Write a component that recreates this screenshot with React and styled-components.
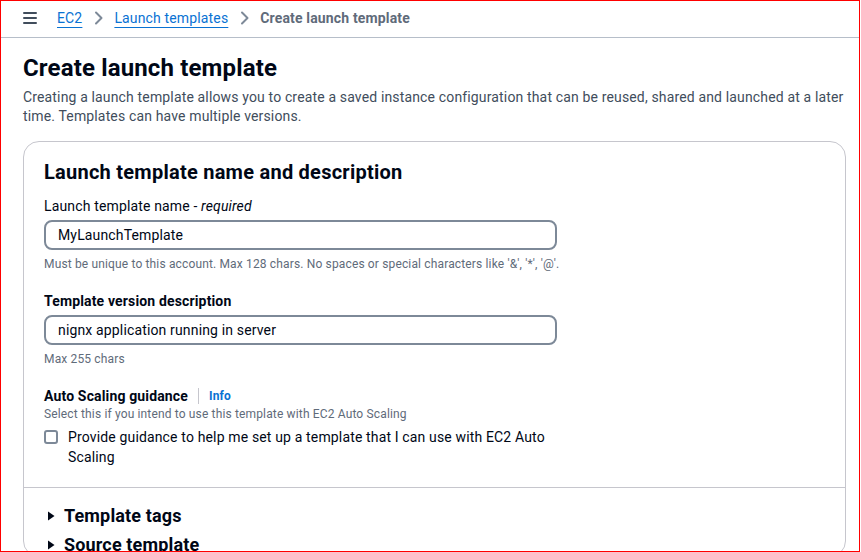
import React, { useState } from "react";
import styled, { createGlobalStyle } from "styled-components";

const GlobalStyle = createGlobalStyle`
  html, body {
    margin: 0;
    padding: 0;
    background: #ffffff;
  }
  body {
    font-family: Roboto, "Noto Sans", Arial, sans-serif;
    letter-spacing: 0.15px;
    color: #000716;
    -webkit-font-smoothing: antialiased;
  }
`;

export default function App() {
  const [guided, setGuided] = useState(false);

  return (
    <Frame>
      <GlobalStyle />
      <TopBar>
        <Burger aria-label="menu">
          <span />
          <span />
          <span />
        </Burger>
        <Crumbs>
          <Crumb href="#">EC2</Crumb>
          <Chevron />
          <Crumb href="#">Launch templates</Crumb>
          <Chevron />
          <Current>Create launch template</Current>
        </Crumbs>
      </TopBar>

      <Page>
        <Title>Create launch template</Title>
        <Lead>
          Creating a launch template allows you to create a saved instance
          configuration that can be reused, shared and launched at a later
          time. Templates can have multiple versions.
        </Lead>

        <Card>
          <CardBody>
            <CardTitle>Launch template name and description</CardTitle>

            <Field>
              <Label>
                Launch template name - <em>required</em>
              </Label>
              <Input defaultValue="MyLaunchTemplate" />
              <Hint>
                Must be unique to this account. Max 128 chars. No spaces or
                special characters like '&amp;', '*', '@'.
              </Hint>
            </Field>

            <Field>
              <Label $bold>Template version description</Label>
              <Input defaultValue="nignx application running in server" />
              <Hint>Max 255 chars</Hint>
            </Field>

            <Field $last>
              <LabelRow>
                <Label $bold>Auto Scaling guidance</Label>
                <InfoLink href="#">Info</InfoLink>
              </LabelRow>
              <Hint $top>Select this if you intend to use this template with EC2 Auto Scaling</Hint>
              <CheckRow>
                <Box
                  type="checkbox"
                  checked={guided}
                  onChange={() => setGuided(!guided)}
                />
                <CheckText>
                  Provide guidance to help me set up a template that I can use
                  with EC2 Auto Scaling
                </CheckText>
              </CheckRow>
            </Field>
          </CardBody>

          <Expandables>
            <Expander>
              <Caret />
              Template tags
            </Expander>
            <Expander>
              <Caret />
              Source template
            </Expander>
          </Expandables>
        </Card>
      </Page>
    </Frame>
  );
}

function Chevron() {
  return (
    <ChevronSvg viewBox="0 0 16 16" width="16" height="16">
      <path
        d="M5 2.5 10.5 8 5 13.5"
        fill="none"
        stroke="#7d8998"
        strokeWidth="2"
        strokeLinecap="round"
        strokeLinejoin="round"
      />
    </ChevronSvg>
  );
}

function Caret() {
  return (
    <CaretSvg viewBox="0 0 8 10" width="8" height="10">
      <path d="M1 0.5 7.5 5 1 9.5Z" fill="#000716" />
    </CaretSvg>
  );
}

const Frame = styled.div`
  box-sizing: border-box;
  width: 860px;
  height: 552px;
  border: 1px solid #ff0000;
  overflow: hidden;
  background: #ffffff;
`;

const TopBar = styled.header`
  box-sizing: border-box;
  height: 37px;
  padding-bottom: 2px;
  border-bottom: 1px solid #b6bec9;
  display: flex;
  align-items: center;
  padding-left: 22px;
`;

const Burger = styled.div`
  width: 14px;
  display: flex;
  flex-direction: column;
  gap: 3px;
  margin-right: 20px;

  span {
    display: block;
    height: 2px;
    background: #414d5c;
    border-radius: 1px;
  }
`;

const Crumbs = styled.nav`
  display: flex;
  align-items: center;
  font-size: 14px;
  line-height: 20px;
`;

const Crumb = styled.a`
  color: #0972d3;
  text-decoration: underline;
  text-underline-offset: 4px;
  text-decoration-thickness: 1px;
`;

const Current = styled.span`
  color: #5f6b7a;
  font-weight: 700;
`;

const ChevronSvg = styled.svg`
  display: block;
  margin: 0 7px 0 9px;
`;

const Page = styled.main`
  padding: 14px 13px 0 22px;
`;

const Title = styled.h1`
  margin: 0;
  font-size: 24px;
  line-height: 32px;
  font-weight: 700;
  color: #000716;
`;

const Lead = styled.p`
  margin: 4px 0 0;
  font-size: 14px;
  line-height: 19px;
  color: #414d5c;
`;

const Card = styled.section`
  margin-top: 15px;
  border: 1px solid #c6c6cd;
  border-radius: 16px;
  background: #ffffff;
`;

const CardBody = styled.div`
  padding: 17px 20px 20px;
  border-bottom: 1px solid #c6c6cd;
`;

const CardTitle = styled.h2`
  margin: 0 0 11px;
  font-size: 20px;
  line-height: 26px;
  font-weight: 700;
  letter-spacing: 0.25px;
  color: #000716;
`;

const Field = styled.div`
  display: flex;
  flex-direction: column;
  margin-bottom: ${(p) => (p.$last ? "0" : "19px")};
`;

const LabelRow = styled.div`
  display: flex;
  align-items: center;
`;

const Label = styled.label`
  font-size: 14px;
  line-height: 20px;
  font-weight: ${(p) => (p.$bold ? 700 : 400)};
  color: #000716;

  em {
    font-style: italic;
  }
`;

const InfoLink = styled.a`
  margin-left: 10px;
  padding-left: 10px;
  border-left: 1px solid #c6c6cd;
  font-size: 12px;
  line-height: 16px;
  font-weight: 700;
  color: #0972d3;
  text-decoration: none;
`;

const Input = styled.input`
  box-sizing: border-box;
  margin-top: 4px;
  width: 513px;
  height: 30px;
  border: 2px solid #7d8998;
  border-radius: 8px;
  padding: 0 12px;
  font-family: inherit;
  font-size: 14px;
  letter-spacing: inherit;
  color: #000716;
  outline: none;
`;

const Hint = styled.div`
  margin-top: ${(p) => (p.$top ? "0" : "6px")};
  font-size: 12px;
  line-height: 16px;
  color: #5f6b7a;
`;

const CheckRow = styled.label`
  margin-top: 5px;
  display: flex;
  align-items: flex-start;
  gap: 10px;
  width: 520px;
`;

const Box = styled.input`
  appearance: none;
  box-sizing: border-box;
  margin: 3px 0 0;
  width: 14px;
  height: 14px;
  flex: none;
  border: 2px solid #7d8998;
  border-radius: 3px;
  background: #ffffff;

  &:checked {
    background: #0972d3;
    border-color: #0972d3;
  }
`;

const CheckText = styled.span`
  font-size: 14px;
  line-height: 20px;
  color: #000716;
`;

const Expandables = styled.div`
  padding: 17px 20px 0;
  display: flex;
  flex-direction: column;
  gap: 7px;
`;

const Expander = styled.div`
  display: flex;
  align-items: center;
  gap: 9px;
  padding-left: 3px;
  font-size: 18px;
  line-height: 22px;
  font-weight: 700;
  color: #000716;
`;

const CaretSvg = styled.svg`
  display: block;
  flex: none;
`;
